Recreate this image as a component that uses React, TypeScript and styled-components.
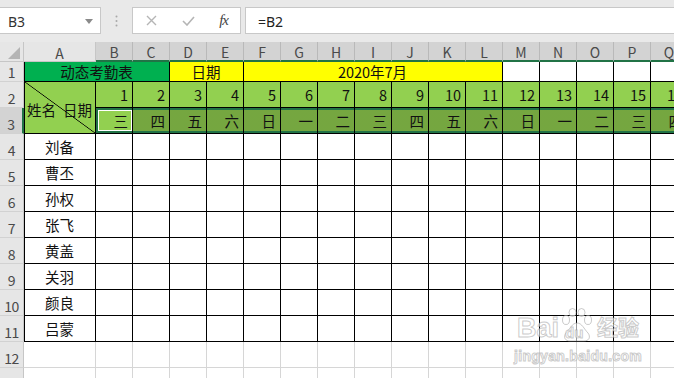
import React from 'react'
import styled, { createGlobalStyle, css } from 'styled-components'

const GlobalStyle = createGlobalStyle`
  html, body {
    margin: 0;
    padding: 0;
    background: #fff;
    overflow: hidden;
  }
  body {
    font-family: "Noto Sans CJK SC", "Noto Sans", sans-serif;
  }
`

const GREEN = '#217346'
const cols = ['A', 'B', 'C', 'D', 'E', 'F', 'G', 'H', 'I', 'J', 'K', 'L', 'M', 'N', 'O', 'P', 'Q']
const days = ['三', '四', '五', '六', '日', '一', '二', '三', '四', '五', '六', '日', '一', '二', '三', '四']
const names = ['刘备', '曹丕', '孙权', '张飞', '黄盖', '关羽', '颜良', '吕蒙']

const Page = styled.div`
  position: relative;
  width: 674px;
  height: 378px;
  overflow: hidden;
  background: #fff;
`

/* formula bar */
const FormulaBar = styled.div`
  display: flex;
  align-items: flex-start;
  height: 42px;
  padding-top: 7px;
  box-sizing: border-box;
  background: #e9e9e9;
`

const NameBox = styled.div`
  width: 101px;
  height: 27px;
  box-sizing: border-box;
  display: flex;
  align-items: center;
  justify-content: space-between;
  padding: 1px 7px 0 8px;
  background: #fff;
  border: 1px solid #c8c8c8;
  border-left: none;
  font: 14px "Noto Sans", sans-serif;
  color: #333;
`

const Grip = styled.div`
  width: 31px;
  height: 27px;
  display: flex;
  align-items: center;
  justify-content: center;
`

const FnBox = styled.div`
  width: 109px;
  height: 27px;
  box-sizing: border-box;
  display: flex;
  align-items: center;
  justify-content: space-between;
  padding: 0 12px 0 13px;
  margin-right: 4px;
  background: #fff;
  border: 1px solid #c8c8c8;
`

const Fx = styled.span`
  font: italic 15px "Liberation Serif", serif;
  color: #444;
  letter-spacing: -1px;
`

const Input = styled.div`
  flex: 1;
  height: 27px;
  box-sizing: border-box;
  display: flex;
  align-items: center;
  padding: 1px 0 0 12px;
  background: #fff;
  border: 1px solid #c8c8c8;
  border-right: none;
  font: 14px "Noto Sans", sans-serif;
  color: #222;
`

/* sheet */
const Sheet = styled.div`
  display: grid;
  grid-template-columns: 24px 72px repeat(16, 37px);
  grid-template-rows: 20px 20px 26px 26px repeat(10, 26px);
`

const Corner = styled.div`
  box-sizing: border-box;
  display: flex;
  align-items: flex-end;
  justify-content: flex-end;
  padding: 0 3px 2px 0;
  background: #e6e6e6;
  border-right: 1px solid #c6c6c6;
  border-bottom: 1px solid #c6c6c6;
`

const ColHead = styled.div<{ $selected?: boolean }>`
  box-sizing: border-box;
  display: flex;
  align-items: center;
  justify-content: center;
  padding-top: 2px;
  background: ${p => (p.$selected ? '#d3d3d3' : '#e6e6e6')};
  border-right: 1px solid ${p => (p.$selected ? '#b9b9b9' : '#c6c6c6')};
  border-bottom: ${p => (p.$selected ? `2px solid ${GREEN}` : '1px solid #c6c6c6')};
  font-size: 14px;
  line-height: 1;
  color: #4a4a4a;
`

const RowHead = styled.div<{ $selected?: boolean }>`
  box-sizing: border-box;
  display: flex;
  align-items: flex-end;
  justify-content: center;
  padding-bottom: 2px;
  background: ${p => (p.$selected ? '#d3d3d3' : '#e6e6e6')};
  border-right: ${p => (p.$selected ? `2px solid ${GREEN}` : '1px solid #c6c6c6')};
  border-bottom: 1px solid #d2d2d2;
  font-size: 14px;
  line-height: 1;
  color: #4a4a4a;
  letter-spacing: -0.5px;
`

type Align = 'left' | 'center' | 'right'
type Sel = 'active' | 'range'

const Cell = styled.div<{
  $bg?: string
  $align?: Align
  $span?: number
  $grid?: boolean
  $edge?: boolean
  $shade?: boolean
  $sel?: Sel
}>`
  grid-column: span ${p => p.$span ?? 1};
  box-sizing: border-box;
  display: flex;
  align-items: center;
  justify-content: ${p =>
    p.$align === 'right' ? 'flex-end' : p.$align === 'left' ? 'flex-start' : 'center'};
  padding: 2px 4px 0 3px;
  background-color: ${p => p.$bg ?? '#fff'};
  border-right: 1px solid ${p => (p.$grid ? '#d6d6d6' : '#000')};
  border-bottom: 1px solid ${p => (p.$grid ? '#d6d6d6' : '#000')};
  border-left: ${p => (p.$edge ? '1px solid #000' : 'none')};
  font-size: 14.5px;
  line-height: 1;
  color: #111;
  white-space: nowrap;
  overflow: hidden;
  ${p =>
    p.$shade &&
    css`
      background-image: linear-gradient(rgba(0, 0, 0, 0.2), rgba(0, 0, 0, 0.2));
    `}
  ${p =>
    p.$sel === 'range' &&
    css`
      box-shadow: inset 0 2px 0 ${GREEN}, inset 0 -2px 0 ${GREEN};
    `}
  ${p =>
    p.$sel === 'active' &&
    css`
      box-shadow: inset 0 2px 0 ${GREEN}, inset 0 -2px 0 ${GREEN}, inset 2px 0 0 ${GREEN},
        inset 0 3px 0 #fff, inset 0 -3px 0 #fff, inset 3px 0 0 #fff, inset -1px 0 0 #fff;
    `}
`

const DiagCell = styled(Cell)`
  grid-row: span 2;
  justify-content: space-between;
  align-items: center;
  padding: 6px 3px 0 2px;
  background: linear-gradient(
    to top right,
    #92d050 calc(50% - 0.7px),
    #000 50%,
    #92d050 calc(50% + 0.7px)
  );
`

/* watermark */
const Watermark = styled.div`
  position: absolute;
  left: 514px;
  top: 308px;
  display: flex;
  flex-direction: column;
  align-items: center;
  pointer-events: none;
  color: rgba(255, 255, 255, 0.6);
  -webkit-text-stroke: 1px rgba(150, 150, 150, 0.5);
`

const WmLine = styled.div`
  display: flex;
  align-items: flex-end;
  font: bold 27px "Liberation Sans", sans-serif;
  line-height: 1;
`

const Paw = styled.div`
  position: relative;
  width: 32px;
  height: 34px;
  margin: 0 2px;
`

const PawText = styled.span`
  position: absolute;
  left: 4px;
  bottom: 1px;
  font: bold 15px "Liberation Sans", sans-serif;
`

const WmCn = styled.span`
  font: bold 21px "Noto Sans CJK SC", sans-serif;
  margin-left: 2px;
  margin-bottom: 1px;
`

const WmUrl = styled.div`
  margin-top: 6px;
  font: bold 14px "Liberation Sans", sans-serif;
  letter-spacing: 0.3px;
`

const X = () => (
  <svg width="11" height="11" viewBox="0 0 11 11">
    <path d="M1 1 L10 10 M10 1 L1 10" stroke="#b5b5b5" strokeWidth="1.4" />
  </svg>
)

const Check = () => (
  <svg width="13" height="10" viewBox="0 0 13 10">
    <path d="M1 5 L5 9 L12 1" stroke="#b5b5b5" strokeWidth="1.6" fill="none" />
  </svg>
)

export default function App() {
  return (
    <Page>
      <GlobalStyle />
      <FormulaBar>
        <NameBox>
          B3
          <svg width="8" height="5" viewBox="0 0 8 5">
            <path d="M0 0 H8 L4 5 Z" fill="#8a8a8a" />
          </svg>
        </NameBox>
        <Grip>
          <svg width="3" height="12" viewBox="0 0 3 12">
            <circle cx="1.5" cy="1.5" r="1" fill="#a8a8a8" />
            <circle cx="1.5" cy="6" r="1" fill="#a8a8a8" />
            <circle cx="1.5" cy="10.5" r="1" fill="#a8a8a8" />
          </svg>
        </Grip>
        <FnBox>
          <X />
          <Check />
          <Fx>fx</Fx>
        </FnBox>
        <Input>=B2</Input>
      </FormulaBar>

      <Sheet>
        <Corner>
          <svg width="12" height="12" viewBox="0 0 12 12">
            <path d="M12 0 V12 H0 Z" fill="#b4b4b4" />
          </svg>
        </Corner>
        {cols.map(c => (
          <ColHead key={c} $selected={c !== 'A'}>
            {c}
          </ColHead>
        ))}

        <RowHead>1</RowHead>
        <Cell $span={3} $edge $bg="#00b050">动态考勤表</Cell>
        <Cell $span={2} $bg="#ffff00">日期</Cell>
        <Cell $span={7} $bg="#ffff00">2020年7月</Cell>
        {[0, 1, 2, 3, 4].map(i => (
          <Cell key={i} />
        ))}

        <RowHead>2</RowHead>
        <DiagCell $edge>
          <span>姓名</span>
          <span>日期</span>
        </DiagCell>
        {days.map((_, i) => (
          <Cell key={i} $bg="#92d050" $align="right">
            {i + 1}
          </Cell>
        ))}

        <RowHead $selected>3</RowHead>
        {days.map((d, i) => (
          <Cell
            key={i}
            $bg="#92d050"
            $align="right"
            $shade={i > 0}
            $sel={i === 0 ? 'active' : 'range'}
          >
            {d}
          </Cell>
        ))}

        {names.map((n, r) => (
          <React.Fragment key={n}>
            <RowHead>{r + 4}</RowHead>
            <Cell $edge>{n}</Cell>
            {days.map((_, i) => (
              <Cell key={i} />
            ))}
          </React.Fragment>
        ))}

        {[12, 13].map(r => (
          <React.Fragment key={r}>
            <RowHead>{r}</RowHead>
            {cols.map(c => (
              <Cell key={c} $grid />
            ))}
          </React.Fragment>
        ))}
      </Sheet>

      <Watermark>
        <WmLine>
          Bai
          <Paw>
            <svg width="32" height="34" viewBox="0 0 32 34">
              <g fill="rgba(255,255,255,0.6)" stroke="rgba(150,150,150,0.5)" strokeWidth="1">
                <ellipse cx="5" cy="12" rx="3.5" ry="4.5" />
                <ellipse cx="11.5" cy="4.5" rx="3.5" ry="4" />
                <ellipse cx="20.5" cy="4.5" rx="3.5" ry="4" />
                <ellipse cx="27" cy="12" rx="3.5" ry="4.5" />
                <path d="M16 15 C11 15 9 21 5 25 C2 29 4 33 9 33 L23 33 C28 33 30 29 27 25 C23 21 21 15 16 15 Z" />
              </g>
            </svg>
            <PawText>du</PawText>
          </Paw>
          <WmCn>经验</WmCn>
        </WmLine>
        <WmUrl>jingyan.baidu.com</WmUrl>
      </Watermark>
    </Page>
  )
}
